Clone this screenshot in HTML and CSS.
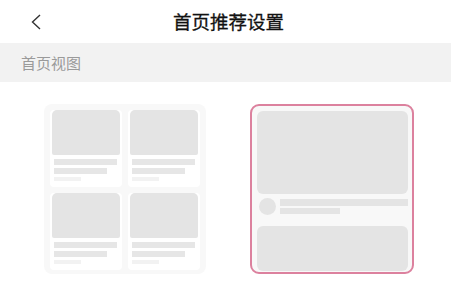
FILE: index.html
```html
<!DOCTYPE html>
<html lang="zh-CN">
<head>
    <meta charset="UTF-8">
    <meta name="viewport" content="width=device-width, initial-scale=1.0">
    <title>首页推荐设置</title>
    <link rel="stylesheet" href="styles.css">
</head>
<body>
    <header class="topbar">
        <span class="back">
            <svg width="12" height="16" viewBox="0 0 12 16"><path d="M10 1 L2.5 8 L10 15" fill="none" stroke="#333" stroke-width="1.4"/></svg>
        </span>
        <h1 class="title">首页推荐设置</h1>
    </header>

    <div class="section-label">首页视图</div>

    <div class="views">
        <!-- 双列视图 -->
        <div class="view grid-view">
            <div class="cell"><div class="pic"></div><div class="ln ln1"></div><div class="ln ln2"></div><div class="ln ln3"></div></div>
            <div class="cell"><div class="pic"></div><div class="ln ln1"></div><div class="ln ln2"></div><div class="ln ln3"></div></div>
            <div class="cell"><div class="pic"></div><div class="ln ln1"></div><div class="ln ln2"></div><div class="ln ln3"></div></div>
            <div class="cell"><div class="pic"></div><div class="ln ln1"></div><div class="ln ln2"></div><div class="ln ln3"></div></div>
        </div>

        <!-- 单列视图（已选） -->
        <div class="view list-view selected">
            <div class="big"></div>
            <div class="author">
                <div class="avatar"></div>
                <div class="lines">
                    <div class="al al1"></div>
                    <div class="al al2"></div>
                </div>
            </div>
            <div class="big big2"></div>
        </div>
    </div>
</body>
</html>
```

FILE: styles.css
```css
body { margin: 0; background: #fff; font-family: "Noto Sans CJK SC", "Noto Sans", sans-serif; }

.topbar { height: 43px; display: flex; align-items: center; }
.back { display: flex; padding-left: 30px; width: 16px; }
.title { flex: 1; margin: 0 0 2px 0; padding-right: 40px; text-align: center; font-size: 18.5px; font-weight: 400; color: #111; -webkit-text-stroke: 0.3px #111; }

.section-label { height: 39px; line-height: 39px; background: #f2f2f2; color: #9a9a9a; font-size: 15px; padding-left: 21px; }

.views { display: flex; gap: 44px; padding: 22px 0 0 44px; }

.view { box-sizing: border-box; height: 170px; background: #f8f8f8; border-radius: 8px; }

.grid-view { width: 162px; padding: 6px 4px 4px 6px; display: grid; grid-template-columns: 72px 72px; grid-template-rows: 77px 77px; gap: 6px; }
.cell { background: #fff; border-radius: 4px; padding: 0 2px; }
.pic { height: 45px; background: #e4e4e4; border-radius: 5px 5px 2px 2px; }
.ln { height: 6px; background: #e6e6e6; margin-left: 2px; }
.ln1 { width: 63px; margin-top: 4px; }
.ln2 { width: 53px; margin-top: 3px; }
.ln3 { width: 27px; height: 4px; margin-top: 3px; background: #f2f2f2; }

.list-view { width: 164px; padding: 5px 4px 1px 5px; border: 2px solid #dc819e; border-radius: 9px; display: flex; flex-direction: column; }
.big { height: 83px; background: #e4e4e4; border-radius: 6px; }
.big2 { height: 45px; margin-top: auto; }
.author { display: flex; align-items: center; gap: 4px; padding: 4px 0 0 2px; }
.avatar { width: 17px; height: 17px; border-radius: 50%; background: #e4e4e4; }
.lines { flex: 1; }
.al { background: #e4e4e4; }
.al1 { height: 7px; }
.al2 { height: 6px; width: 60px; margin-top: 2px; }
```
